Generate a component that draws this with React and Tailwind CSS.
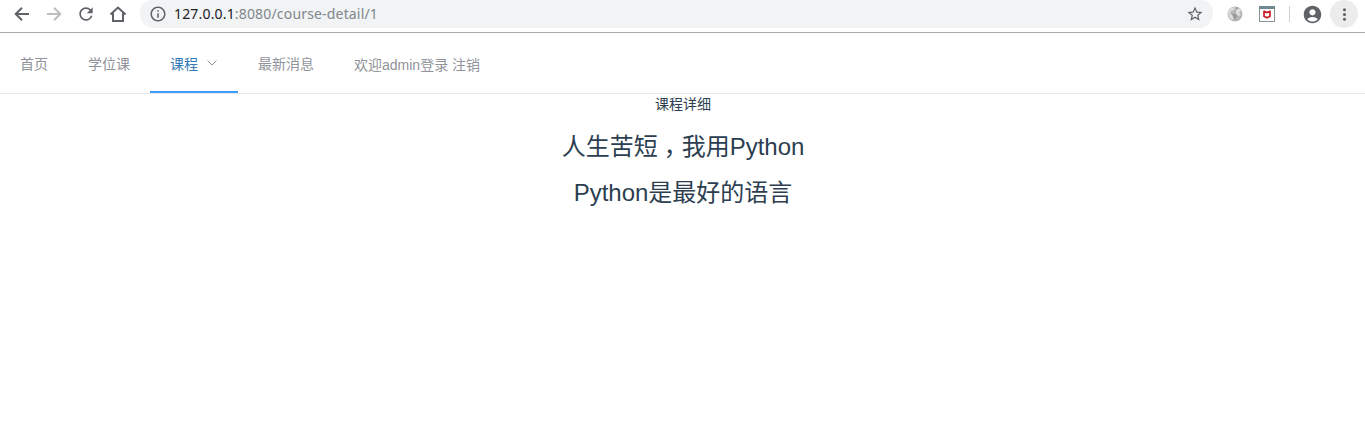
import React from 'react';
import { MdRefresh, MdInfoOutline, MdStarBorder, MdAccountCircle, MdMoreVert } from 'react-icons/md';

function BrowserBar() {
  return (
    <header className="flex h-[33px] items-start border-b border-[#a9abad] bg-white text-[#5f6368]">
      <div className="flex h-7 w-[140px] shrink-0 items-center gap-3 pl-3">
        <svg className="size-5" viewBox="0 0 20 20" fill="none" stroke="currentColor" strokeWidth="2"><path d="M17 10H4M10 3.7 3.7 10l6.3 6.3" /></svg>
        <svg className="size-5 text-[#bcbec1]" viewBox="0 0 20 20" fill="none" stroke="currentColor" strokeWidth="2"><path d="M3 10h13M10 3.7l6.3 6.3-6.3 6.3" /></svg>
        <MdRefresh className="size-5" />
        <svg className="size-5" viewBox="0 0 20 20" fill="none" stroke="currentColor" strokeWidth="2"><path d="M2.5 10.5 10 3.5l7.5 7M5 9v8h10V9" /></svg>
      </div>
      <div className="flex h-7 w-[1073px] shrink-0 items-center rounded-b-[14px] rounded-t-[12px] bg-[#f1f3f4] pl-[9px] pr-[9px]">
        <MdInfoOutline className="size-[18px]" />
        <span className="ml-[7px] flex-1 font-['Noto_Sans',sans-serif] text-[14px] leading-7 tracking-[0.17px] text-[#80868b]">
          <span className="text-[#202124]">127.0.0.1</span>:8080/course-detail/1
        </span>
        <MdStarBorder className="size-[18px]" />
      </div>
      <div className="flex h-7 flex-1 items-center pl-[14px]">
        <svg className="size-4" viewBox="0 0 16 16">
          <circle cx="8" cy="8" r="7.5" fill="#b5b5b5" />
          <path d="M1 6 4 2l4-1-1 3-3 1-1 3 3 1 1 3-2 2-3-3zM9 4l3-2 2 3-2 2 2 2-3 1-2-3z" fill="#dedede" />
          <path d="M5 8h4l1 2-2 4-2-3zM10 1l2 1-3 2z" fill="#999" />
        </svg>
        <svg className="ml-4 size-4" viewBox="0 0 16 16">
          <rect x=".5" y=".5" width="15" height="15" fill="#fff" stroke="#8c9294" />
          <path d="M0 0h16v3H0z" fill="#71898e" />
          <path d="M5 5v5.2L8 11.8l3-1.6V5M4.5 5 8 6.5l3.5-1.5" fill="none" stroke="#c91b24" strokeWidth="1.7" />
        </svg>
        <div className="ml-[14px] h-4 w-px bg-[#cfd1d3]" />
        <MdAccountCircle className="ml-3 size-[21px]" />
        <div className="ml-[7px] flex size-7 items-center justify-center rounded-full bg-[#ececec]">
          <MdMoreVert className="size-[19px]" />
        </div>
      </div>
    </header>
  );
}

function NavBar() {
  return (
    <nav className="flex h-[61px] border-b border-[#e6e6e6] text-[14px] leading-[62px] text-[#909399]">
      <a className="px-5">首页</a>
      <a className="px-5">学位课</a>
      <a className="flex h-[60px] w-[88px] items-start border-b-2 border-[#409eff] pl-5 text-[#337ab7]">
        <span>课程</span>
        <svg className="ml-2 mt-6 size-3 text-[#909399]" viewBox="0 0 12 12" fill="none" stroke="currentColor"><path d="m1.5 3.5 4.5 4.5 4.5-4.5" /></svg>
      </a>
      <a className="px-5">最新消息</a>
      <span className="px-5 pt-px">欢迎admin登录 注销</span>
    </nav>
  );
}

export default function App() {
  return (
    <div className="h-[433px] overflow-hidden bg-white font-['Liberation_Sans','Noto_Sans_CJK_SC',sans-serif]">
      <BrowserBar />
      <NavBar />
      <main className="flex flex-col items-center pl-px text-[#2c3e50]">
        <p className="text-[14px] leading-5">课程详细</p>
        <h3 className="mt-5 text-[24px] leading-[26px]">
          人生苦短<span className="inline-block w-6 text-center [font-feature-settings:'halt']">，</span>我用Python
        </h3>
        <h3 className="mt-5 text-[24px] leading-[26px]">Python是最好的语言</h3>
      </main>
    </div>
  );
}
